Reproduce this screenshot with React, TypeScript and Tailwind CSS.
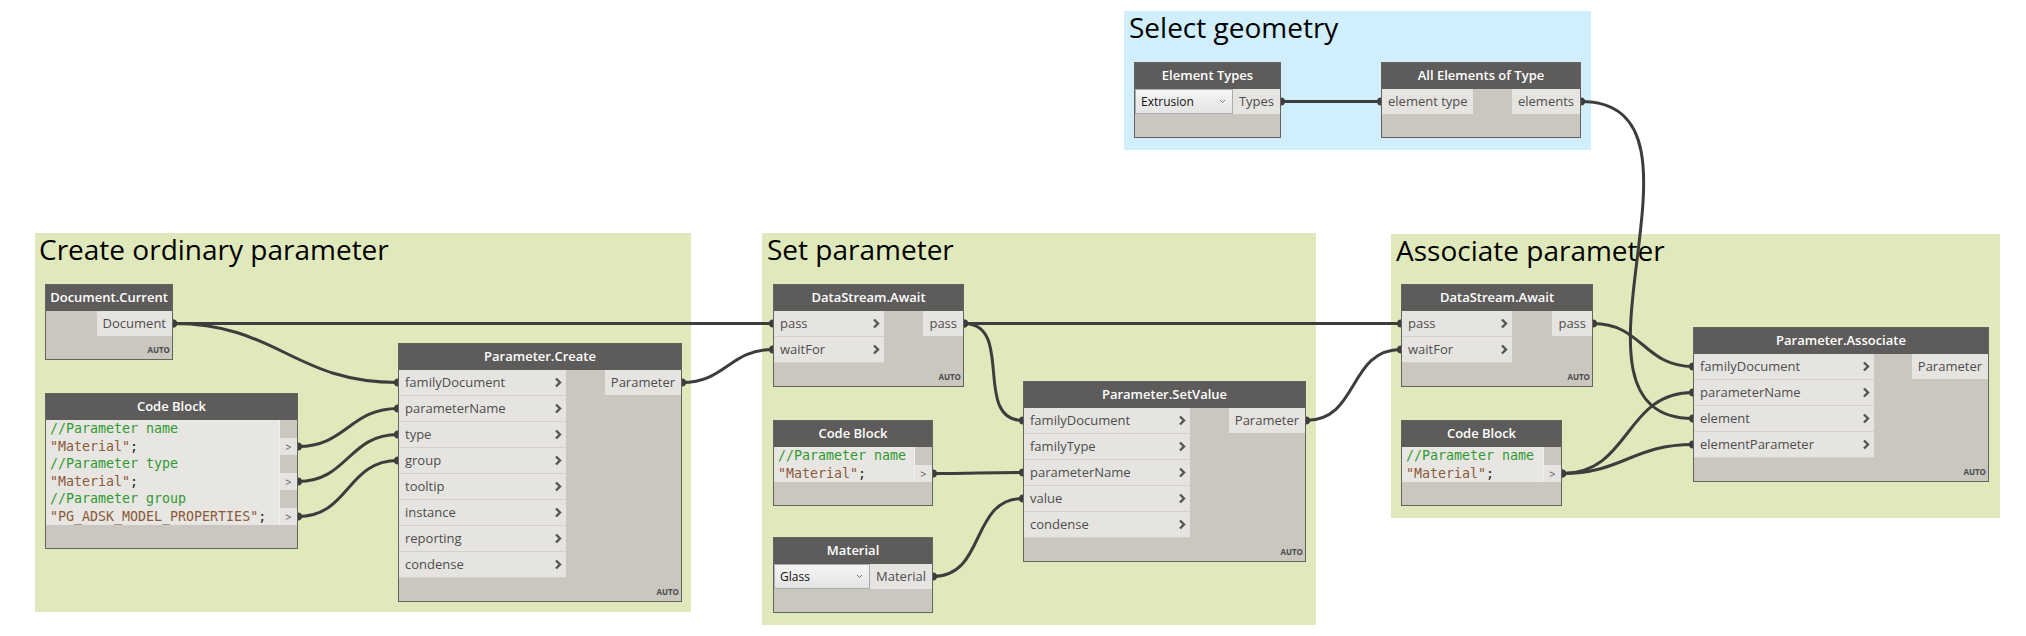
import React from "react";

const WIRE = "#3d3d3d";

function Chevron() {
  return (
    <svg width="8" height="11" viewBox="0 0 8 11" className="shrink-0">
      <path d="M2 1.5 L6 5.5 L2 9.5" fill="none" stroke="#555555" strokeWidth="2.4" />
    </svg>
  );
}

function InRow({ label, chevron = true }: { label: string; chevron?: boolean }) {
  return (
    <div className="h-[26px] border-b border-[#d4d1cb] bg-[#e6e4e0] flex items-center justify-between pl-[6px] pr-[4px]">
      <span>{label}</span>
      {chevron && <Chevron />}
    </div>
  );
}

function OutPort({ label }: { label: string }) {
  return <div className="h-[25px] bg-[#e6e4e0] flex items-center justify-end px-[6px]">{label}</div>;
}

function Header({ title }: { title: string }) {
  return (
    <div className="h-[26px] bg-[#5e5c5a] text-white font-semibold text-[13px] flex items-center justify-center">
      {title}
    </div>
  );
}

function Footer({ auto }: { auto?: boolean }) {
  return (
    <div className="h-[23px] flex items-end justify-end pr-[2px] pb-[5px]">
      {auto && <span className="text-[8px] font-bold leading-none text-[#4a4a4a]">AUTO</span>}
    </div>
  );
}

function Dropdown({ label, w }: { label: string; w: string }) {
  return (
    <div
      className={`${w} h-[25px] border border-[#acacac] bg-gradient-to-b from-[#f5f5f5] to-[#e4e4e4] flex items-center justify-between pl-[5px] pr-[6px] text-[12px] text-[#111]`}
    >
      <span>{label}</span>
      <svg width="7" height="5" viewBox="0 0 7 5">
        <path d="M1 1 L3.5 3.5 L6 1" fill="none" stroke="#777" strokeWidth="1" />
      </svg>
    </div>
  );
}

type Line = { t: string; k: "c" | "s" };

function CodeLine({ line }: { line: Line }) {
  if (line.k === "c") return <div className="h-[17.5px] text-[#2f9a2f]">{line.t}</div>;
  return (
    <div className="h-[17.5px]">
      <span className="text-[#8a5a3a]">{line.t}</span>
      <span className="text-[#222]">;</span>
    </div>
  );
}

function CodeBody({ lines }: { lines: Line[] }) {
  return (
    <div className="flex">
      <div className="flex-1 bg-[#e8e6e3] pl-[4px] font-['DejaVu_Sans_Mono',monospace] text-[13.3px] leading-[17.5px] whitespace-pre">
        {lines.map((l, i) => (
          <CodeLine key={i} line={l} />
        ))}
      </div>
      <div className="w-[18px] border-l border-[#f2f1ef] flex flex-col">
        {lines.map((l, i) =>
          l.k === "s" ? (
            <div key={i} className="h-[17.5px] bg-[#e6e4e0] flex items-center justify-center text-[11px] text-[#555] leading-none">
              &gt;
            </div>
          ) : (
            <div key={i} className="h-[17.5px]" />
          )
        )}
      </div>
    </div>
  );
}

function wirePath(x1: number, y1: number, x2: number, y2: number) {
  const d = Math.hypot(x2 - x1, y2 - y1) * 0.45;
  return `M${x1} ${y1} C${x1 + d} ${y1} ${x2 - d} ${y2} ${x2} ${y2}`;
}

const wires: [number, number, number, number][] = [
  [173, 323.5, 773, 323.5],
  [173, 323.5, 398, 382.5],
  [298, 446.5, 398, 408.5],
  [298, 481.5, 398, 434.5],
  [298, 516.5, 398, 460.5],
  [682, 382.5, 773, 349.5],
  [964, 323.5, 1401, 323.5],
  [964, 323.5, 1023, 420.5],
  [933, 473.5, 1023, 472.5],
  [933, 576.5, 1023, 498.5],
  [1306, 420.5, 1401, 349.5],
  [1281, 101.5, 1381, 101.5],
  [1581, 101.5, 1693, 418.5],
  [1562, 473.5, 1693, 392.5],
  [1562, 473.5, 1693, 444.5],
  [1593, 323.5, 1693, 366.5],
];

const NODE = "absolute border border-[#66635e] bg-[#cac6c0] text-[13px] text-[#4d4d4d]";

export default function App() {
  return (
    <div className="relative w-[2026px] h-[636px] bg-white overflow-hidden font-['Open_Sans',sans-serif]">
      {/* Groups */}
      <div className="absolute left-[35px] top-[233px] w-[656px] h-[379px] bg-[#e0e9bb]">
        <div className="pl-[4px] pt-[2px] text-[28px] leading-[28px] text-black">Create ordinary parameter</div>
      </div>
      <div className="absolute left-[762px] top-[233px] w-[554px] h-[392px] bg-[#e0e9bb]">
        <div className="pl-[5px] pt-[2px] text-[28px] leading-[28px] text-black">Set parameter</div>
      </div>
      <div className="absolute left-[1391px] top-[234px] w-[609px] h-[284px] bg-[#e0e9bb]">
        <div className="pl-[5px] pt-[2px] text-[28px] leading-[28px] text-black">Associate parameter</div>
      </div>
      <div className="absolute left-[1124px] top-[11px] w-[467px] h-[139px] bg-[#d0eefc]">
        <div className="pl-[5px] pt-[2px] text-[28px] leading-[28px] text-black">Select geometry</div>
      </div>

      {/* Wires */}
      <svg className="absolute left-0 top-0 pointer-events-none" width="2026" height="636">
        {wires.map(([a, b, c, d], i) => (
          <path key={i} d={wirePath(a, b, c, d)} fill="none" stroke={WIRE} strokeWidth="3" />
        ))}
        {wires.map(([a, b, c, d], i) => (
          <g key={"n" + i} fill={WIRE}>
            <circle cx={a} cy={b} r="4" />
            <circle cx={c} cy={d} r="4" />
          </g>
        ))}
      </svg>

      {/* Document.Current */}
      <div className={`${NODE} left-[45px] top-[284px] w-[128px]`}>
        <Header title="Document.Current" />
        <div className="flex justify-end">
          <OutPort label="Document" />
        </div>
        <Footer auto />
      </div>

      {/* Code Block 1 */}
      <div className={`${NODE} left-[45px] top-[393px] w-[253px]`}>
        <Header title="Code Block" />
        <CodeBody
          lines={[
            { t: "//Parameter name", k: "c" },
            { t: '"Material"', k: "s" },
            { t: "//Parameter type", k: "c" },
            { t: '"Material"', k: "s" },
            { t: "//Parameter group", k: "c" },
            { t: '"PG_ADSK_MODEL_PROPERTIES"', k: "s" },
          ]}
        />
        <Footer />
      </div>

      {/* Parameter.Create */}
      <div className={`${NODE} left-[398px] top-[343px] w-[284px]`}>
        <Header title="Parameter.Create" />
        <div className="flex justify-between items-start">
          <div className="w-[167px] flex flex-col">
            {["familyDocument", "parameterName", "type", "group", "tooltip", "instance", "reporting", "condense"].map((l) => (
              <InRow key={l} label={l} />
            ))}
          </div>
          <OutPort label="Parameter" />
        </div>
        <Footer auto />
      </div>

      {/* DataStream.Await 1 */}
      <div className={`${NODE} left-[773px] top-[284px] w-[191px]`}>
        <Header title="DataStream.Await" />
        <div className="flex justify-between items-start">
          <div className="w-[110px] flex flex-col">
            <InRow label="pass" />
            <InRow label="waitFor" />
          </div>
          <OutPort label="pass" />
        </div>
        <Footer auto />
      </div>

      {/* Code Block 2 */}
      <div className={`${NODE} left-[773px] top-[420px] w-[160px]`}>
        <Header title="Code Block" />
        <CodeBody
          lines={[
            { t: "//Parameter name", k: "c" },
            { t: '"Material"', k: "s" },
          ]}
        />
        <Footer />
      </div>

      {/* Material */}
      <div className={`${NODE} left-[773px] top-[537px] w-[160px]`}>
        <Header title="Material" />
        <div className="flex justify-between items-start">
          <Dropdown label="Glass" w="w-[98px]" />
          <OutPort label="Material" />
        </div>
        <Footer />
      </div>

      {/* Parameter.SetValue */}
      <div className={`${NODE} left-[1023px] top-[381px] w-[283px]`}>
        <Header title="Parameter.SetValue" />
        <div className="flex justify-between items-start">
          <div className="w-[166px] flex flex-col">
            {["familyDocument", "familyType", "parameterName", "value", "condense"].map((l) => (
              <InRow key={l} label={l} />
            ))}
          </div>
          <OutPort label="Parameter" />
        </div>
        <Footer auto />
      </div>

      {/* DataStream.Await 2 */}
      <div className={`${NODE} left-[1401px] top-[284px] w-[192px]`}>
        <Header title="DataStream.Await" />
        <div className="flex justify-between items-start">
          <div className="w-[110px] flex flex-col">
            <InRow label="pass" />
            <InRow label="waitFor" />
          </div>
          <OutPort label="pass" />
        </div>
        <Footer auto />
      </div>

      {/* Code Block 3 */}
      <div className={`${NODE} left-[1401px] top-[420px] w-[161px]`}>
        <Header title="Code Block" />
        <CodeBody
          lines={[
            { t: "//Parameter name", k: "c" },
            { t: '"Material"', k: "s" },
          ]}
        />
        <Footer />
      </div>

      {/* Parameter.Associate */}
      <div className={`${NODE} left-[1693px] top-[327px] w-[296px]`}>
        <Header title="Parameter.Associate" />
        <div className="flex justify-between items-start">
          <div className="w-[180px] flex flex-col">
            {["familyDocument", "parameterName", "element", "elementParameter"].map((l) => (
              <InRow key={l} label={l} />
            ))}
          </div>
          <OutPort label="Parameter" />
        </div>
        <Footer auto />
      </div>

      {/* Element Types */}
      <div className={`${NODE} left-[1134px] top-[62px] w-[147px]`}>
        <Header title="Element Types" />
        <div className="flex justify-between items-start">
          <Dropdown label="Extrusion" w="w-[99px]" />
          <OutPort label="Types" />
        </div>
        <Footer />
      </div>

      {/* All Elements of Type */}
      <div className={`${NODE} left-[1381px] top-[62px] w-[200px]`}>
        <Header title="All Elements of Type" />
        <div className="flex justify-between items-start">
          <div className="w-[91px] h-[25px] bg-[#e6e4e0] flex items-center pl-[6px]">element type</div>
          <OutPort label="elements" />
        </div>
        <Footer />
      </div>
    </div>
  );
}
